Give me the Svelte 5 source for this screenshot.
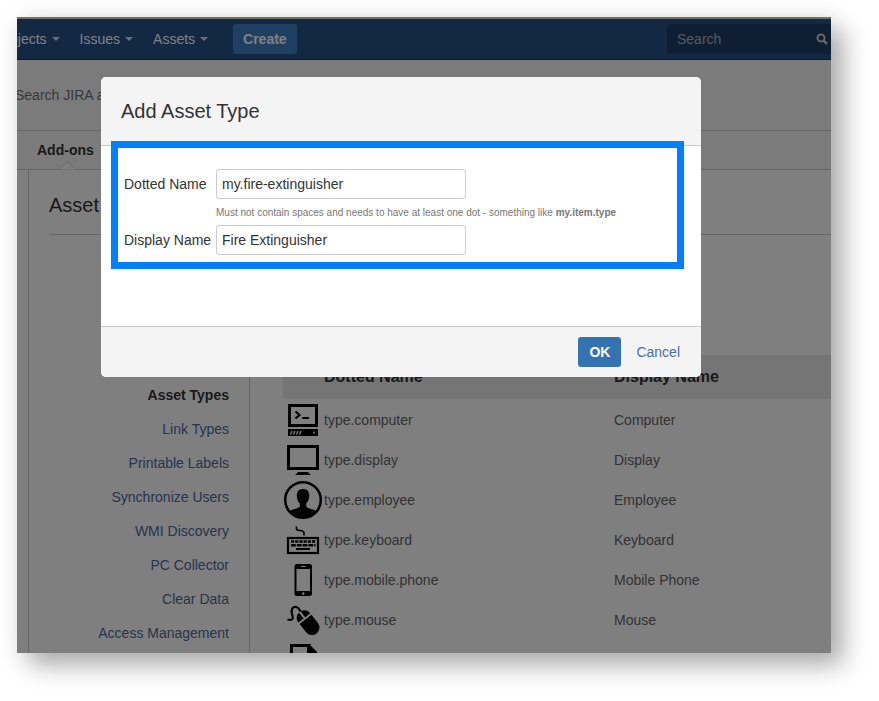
<script>
  const menus = ['Projects', 'Issues', 'Assets'];
  const links = [
    'Asset Types',
    'Link Types',
    'Printable Labels',
    'Synchronize Users',
    'WMI Discovery',
    'PC Collector',
    'Clear Data',
    'Access Management'
  ];
  const rows = [
    { icon: 'computer', dotted: 'type.computer', display: 'Computer' },
    { icon: 'display', dotted: 'type.display', display: 'Display' },
    { icon: 'employee', dotted: 'type.employee', display: 'Employee' },
    { icon: 'keyboard', dotted: 'type.keyboard', display: 'Keyboard' },
    { icon: 'phone', dotted: 'type.mobile.phone', display: 'Mobile Phone' },
    { icon: 'mouse', dotted: 'type.mouse', display: 'Mouse' },
    { icon: 'document', dotted: '', display: '' }
  ];
  let dottedName = $state('my.fire-extinguisher');
  let displayName = $state('Fire Extinguisher');
</script>

{#snippet typeIcon(name)}
  <svg class="type-icon" viewBox="0 0 40 40" aria-hidden="true">
    {#if name === 'computer'}
      <rect x="6.5" y="5.5" width="27" height="20" fill="none" stroke="#000" stroke-width="3" />
      <path d="M12.5 11.5l4 3.5-4 3.5" fill="none" stroke="#000" stroke-width="2.2" />
      <path d="M19 18h7" stroke="#000" stroke-width="2" />
      <path d="M5 29h30v7H5z" />
      <path d="M7.5 34.5l1.5-3.5M10.500 34.5l1.5-3.5M13.500 34.5l1.5-3.5M16.500 34.5l1.5-3.5" stroke="#fff" stroke-width="1.4" />
      <circle cx="31" cy="32.5" r="1" fill="#fff" />
    {:else if name === 'display'}
      <rect x="5.5" y="6.5" width="29" height="22" fill="none" stroke="#000" stroke-width="3" />
      <path d="M15 32h10q1 1.500 3 3H12q2-1.500 3-3z" />
    {:else if name === 'employee'}
      <circle cx="20" cy="20" r="17.8" fill="none" stroke="#000" stroke-width="2.6" />
      <path d="M20 9c4.500 0 6.500 3 6.200 7.500-.2 3-1.500 5.500-3 7v3c1 2 7 2.500 10 4.500A17 17 0 0 1 6.800 31c3-2 9-2.500 10-4.500v-3c-1.500-1.500-2.800-4-3-7C13.500 12 15.500 9 20 9z" />
    {:else if name === 'keyboard'}
      <path d="M13.500 6.500c-.5 3 .5 4 3.500 4 3.500 0 4.500 1.500 4 5" fill="none" stroke="#000" stroke-width="1.6" />
      <rect x="5" y="18" width="30" height="15" fill="none" stroke="#000" stroke-width="2.2" />
      <path d="M8 21.500h24.500" stroke="#000" stroke-width="2.6" stroke-dasharray="3.2 1" />
      <path d="M8 25.300h24.500" stroke="#000" stroke-width="2.6" stroke-dasharray="4.8 1" />
      <path d="M13 29h14" stroke="#000" stroke-width="2" />
    {:else if name === 'phone'}
      <path fill-rule="evenodd" d="M14 4h12.500a2.500 2.500 0 0 1 2.500 2.500v27a2.500 2.500 0 0 1-2.500 2.500H14a2.500 2.500 0 0 1-2.500-2.500v-27A2.500 2.500 0 0 1 14 4zm-.5 5v22H27V9zM18 6v1h4.500V6zm2.200 26.200a1.300 1.300 0 1 0 .1 0z" />
    {:else if name === 'mouse'}
      <path d="M4.500 19.500c6 1.500 6-1 4.500-5.500-1.500-4.500 1-8 4.500-7 2.500.8 3 2.500 4 4.500" fill="none" stroke="#000" stroke-width="2.2" />
      <g transform="rotate(-38 25 22.5)">
        <path d="M17.500 16.500c0-4 2.500-7 6.500-7.300v7.300zM26 9.200c4 .3 6.500 3.300 6.500 7.300H26z" />
        <path d="M17.500 18.500h15V29a7.500 7.500 0 0 1-15 0z" />
      </g>
    {:else}
      <path d="M8.500 38V5.500H26V13h6v25" fill="none" stroke="#000" stroke-width="3" />
      <path d="M24 4h2l8 8v2H24z" />
    {/if}
  </svg>
{/snippet}

<main class="page">
  <div class="screen">
    <div class="announcement"></div>
    <header class="topbar">
      <nav class="menus">
        {#each menus as menu}
          <button class="menu" type="button">{menu}<span class="caret"></span></button>
        {/each}
        <button class="create" type="button">Create</button>
      </nav>
      <div class="quick">
        <input type="text" placeholder="Search" aria-label="Search" />
        <svg viewBox="0 0 12 12" aria-hidden="true">
          <circle cx="5" cy="5" r="3.5" fill="none" stroke="currentColor" stroke-width="2" />
          <path d="M7.500 7.500l3.500 3.500" stroke="currentColor" stroke-width="2.5" />
        </svg>
      </div>
    </header>

    <div class="admin-search">Search JIRA admin</div>
    <nav class="tabs"><a class="tab" href="#addons">Add-ons</a></nav>

    <section class="content">
      <h1>Asset</h1>
      <div class="columns">
        <nav class="side">
          {#each links as link, i}
            <a class:current={i === 0} href="#section-{i}">{link}</a>
          {/each}
        </nav>
        <div class="panel">
          <table>
            <thead>
              <tr><th class="icon-col"></th><th class="dotted-col">Dotted Name</th><th>Display Name</th></tr>
            </thead>
            <tbody>
              {#each rows as row}
                <tr>
                  <td>{@render typeIcon(row.icon)}</td>
                  <td>{row.dotted}</td>
                  <td>{row.display}</td>
                </tr>
              {/each}
            </tbody>
          </table>
        </div>
      </div>
    </section>

    <div class="blanket"></div>

    <div class="dialog" role="dialog" aria-labelledby="dialog-title">
      <h2 id="dialog-title">Add Asset Type</h2>
      <form class="fields">
        <label for="dotted">Dotted Name</label>
        <input id="dotted" type="text" bind:value={dottedName} />
        <p class="hint">
          Must not contain spaces and needs to have at least one dot - something like <strong>my.item.type</strong>
        </p>
        <label for="display">Display Name</label>
        <input id="display" type="text" bind:value={displayName} />
      </form>
      <footer>
        <button class="ok" type="button">OK</button>
        <button class="cancel" type="button">Cancel</button>
      </footer>
      <div class="highlight"></div>
    </div>
  </div>
</main>

<style>
  :global(body) {
    background: #fff;
  }
  .page,
  .page * {
    box-sizing: border-box;
  }
  .page {
    height: 100vh;
    padding: 17px 48px 48px 17px;
    font: 14px/20px 'Liberation Sans', Arial, sans-serif;
    color: #333;
  }
  button,
  input {
    font: inherit;
  }
  button {
    border: 0;
    cursor: pointer;
  }
  a {
    text-decoration: none;
  }
  .screen {
    position: relative;
    height: 100%;
    overflow: hidden;
    display: flex;
    flex-direction: column;
    background: #fff;
  }
  .announcement {
    flex: none;
    height: 2px;
    background: #e8e2b8;
  }
  .page::before {
    content: '';
    position: absolute;
    z-index: -1;
    inset: 17px 48px 48px 17px;
    box-shadow: 12px 12px 24px rgba(0, 0, 0, 0.32), 0 0 24px rgba(0, 0, 0, 0.06);
  }
  .topbar {
    flex: none;
    height: 41px;
    display: flex;
    align-items: center;
    justify-content: space-between;
    background: #245086;
    border-bottom: 1px solid #1c3450;
  }
  .menus {
    display: flex;
    align-items: center;
    margin-left: -31px;
  }
  .menu {
    display: flex;
    align-items: center;
    gap: 5px;
    padding: 0 10px;
    background: none;
    color: #fff;
  }
  .caret {
    border: 4px solid transparent;
    border-top-color: #ddd;
    border-bottom: 0;
  }
  .create {
    height: 30px;
    margin-left: 15px;
    padding: 0 10px;
    border-radius: 3px;
    background: #4080c4;
    color: #fff;
    font-weight: bold;
  }
  .quick {
    display: flex;
    align-items: center;
    width: 164px;
    height: 30px;
    padding: 0 3px 0 10px;
    border-radius: 3px 0 0 3px;
    background: #1c3e66;
    color: #ccc;
  }
  .quick input {
    flex: 1;
    min-width: 0;
    padding: 0;
    border: 0;
    background: none;
    color: #ccc;
  }
  .quick input::placeholder {
    color: #aab4c0;
  }
  .quick svg {
    width: 12px;
    height: 12px;
  }
  .admin-search {
    flex: none;
    height: 71px;
    padding: 25px 0;
    text-indent: -2px;
    background: #f7f7f7;
    border-bottom: 1px solid #ccc;
    color: #707070;
  }
  .tabs {
    flex: none;
    display: flex;
    height: 39px;
    padding: 0 20px;
    background: #f7f7f7;
    border-bottom: 1px solid #ccc;
  }
  .tab {
    position: relative;
    line-height: 38px;
    color: #333;
    font-weight: bold;
  }
  .tab::after {
    content: '';
    position: absolute;
    left: 24px;
    bottom: -7px;
    width: 12px;
    height: 12px;
    background: #fff;
    border: solid #ccc;
    border-width: 1px 0 0 1px;
    transform: rotate(45deg);
    clip-path: polygon(0 0, 100% 0, 0 100%);
  }
  .content {
    flex: 1;
    min-height: 0;
    margin-left: 11px;
    border-left: 1px solid #ccc;
    padding-left: 20px;
    display: flex;
    flex-direction: column;
  }
  h1 {
    margin: 0;
    padding: 23px 0 17px;
    font-size: 20px;
    line-height: 24px;
    font-weight: normal;
    border-bottom: 1px solid #ccc;
  }
  .columns {
    flex: 1;
    display: flex;
    min-height: 0;
  }
  .side {
    flex: none;
    display: flex;
    flex-direction: column;
    gap: 14px;
    width: 201px;
    padding: 150px 20px 0 0;
    border-right: 1px solid #ccc;
    text-align: right;
  }
  .side a {
    color: #4a6a9c;
    white-space: nowrap;
  }
  .side a.current {
    color: #333;
    font-weight: bold;
  }
  .panel {
    flex: 1;
    padding: 120px 0 0 33px;
  }
  table {
    width: 100%;
    border-spacing: 0;
    table-layout: fixed;
  }
  th {
    height: 45px;
    padding: 0;
    text-align: left;
    font-size: 16px;
    background: #ebebeb;
    border-bottom: 1px solid #fff;
  }
  .icon-col {
    width: 41px;
  }
  .dotted-col {
    width: 290px;
  }
  td {
    height: 40px;
    padding: 0;
    color: #666;
  }
  .type-icon {
    display: block;
    width: 40px;
    height: 40px;
  }
  .blanket {
    position: absolute;
    inset: 0;
    background: rgba(0, 0, 0, 0.5);
  }
  .dialog {
    position: absolute;
    top: 60px;
    left: 84px;
    width: 600px;
    border-radius: 5px;
    background: #fff;
  }
  h2 {
    margin: 0;
    padding: 22px 20px;
    font-size: 20px;
    line-height: 24px;
    font-weight: normal;
    background: #f4f4f4;
    border-bottom: 1px solid #ccc;
    border-radius: 5px 5px 0 0;
  }
  .fields {
    display: grid;
    grid-template-columns: 92px 1fr;
    align-items: center;
    padding: 23px 23px 71px;
  }
  .fields label {
    white-space: nowrap;
  }
  .fields input {
    width: 250px;
    height: 30px;
    padding: 0 5px;
    border: 1px solid #ccc;
    border-radius: 3px;
    background: #fff;
    color: #333;
  }
  .hint {
    grid-column: 2;
    margin: 0;
    padding: 6px 0 4px;
    font-size: 10px;
    line-height: 16px;
    color: #777;
    white-space: nowrap;
  }
  footer {
    display: flex;
    justify-content: flex-end;
    align-items: center;
    height: 51px;
    padding: 0 11px;
    gap: 5px;
    background: #f4f4f4;
    border-top: 1px solid #ccc;
    border-radius: 0 0 5px 5px;
  }
  .ok {
    height: 30px;
    padding: 0 11px;
    border-radius: 3px;
    background: #3572b0;
    color: #fff;
    font-weight: bold;
  }
  .cancel {
    padding: 0 10px;
    background: none;
    color: #4a6fa5;
  }
  .highlight {
    position: absolute;
    top: 64px;
    left: 10px;
    right: 17px;
    height: 128px;
    border: 7px solid #0080ff;
    pointer-events: none;
  }
</style>
